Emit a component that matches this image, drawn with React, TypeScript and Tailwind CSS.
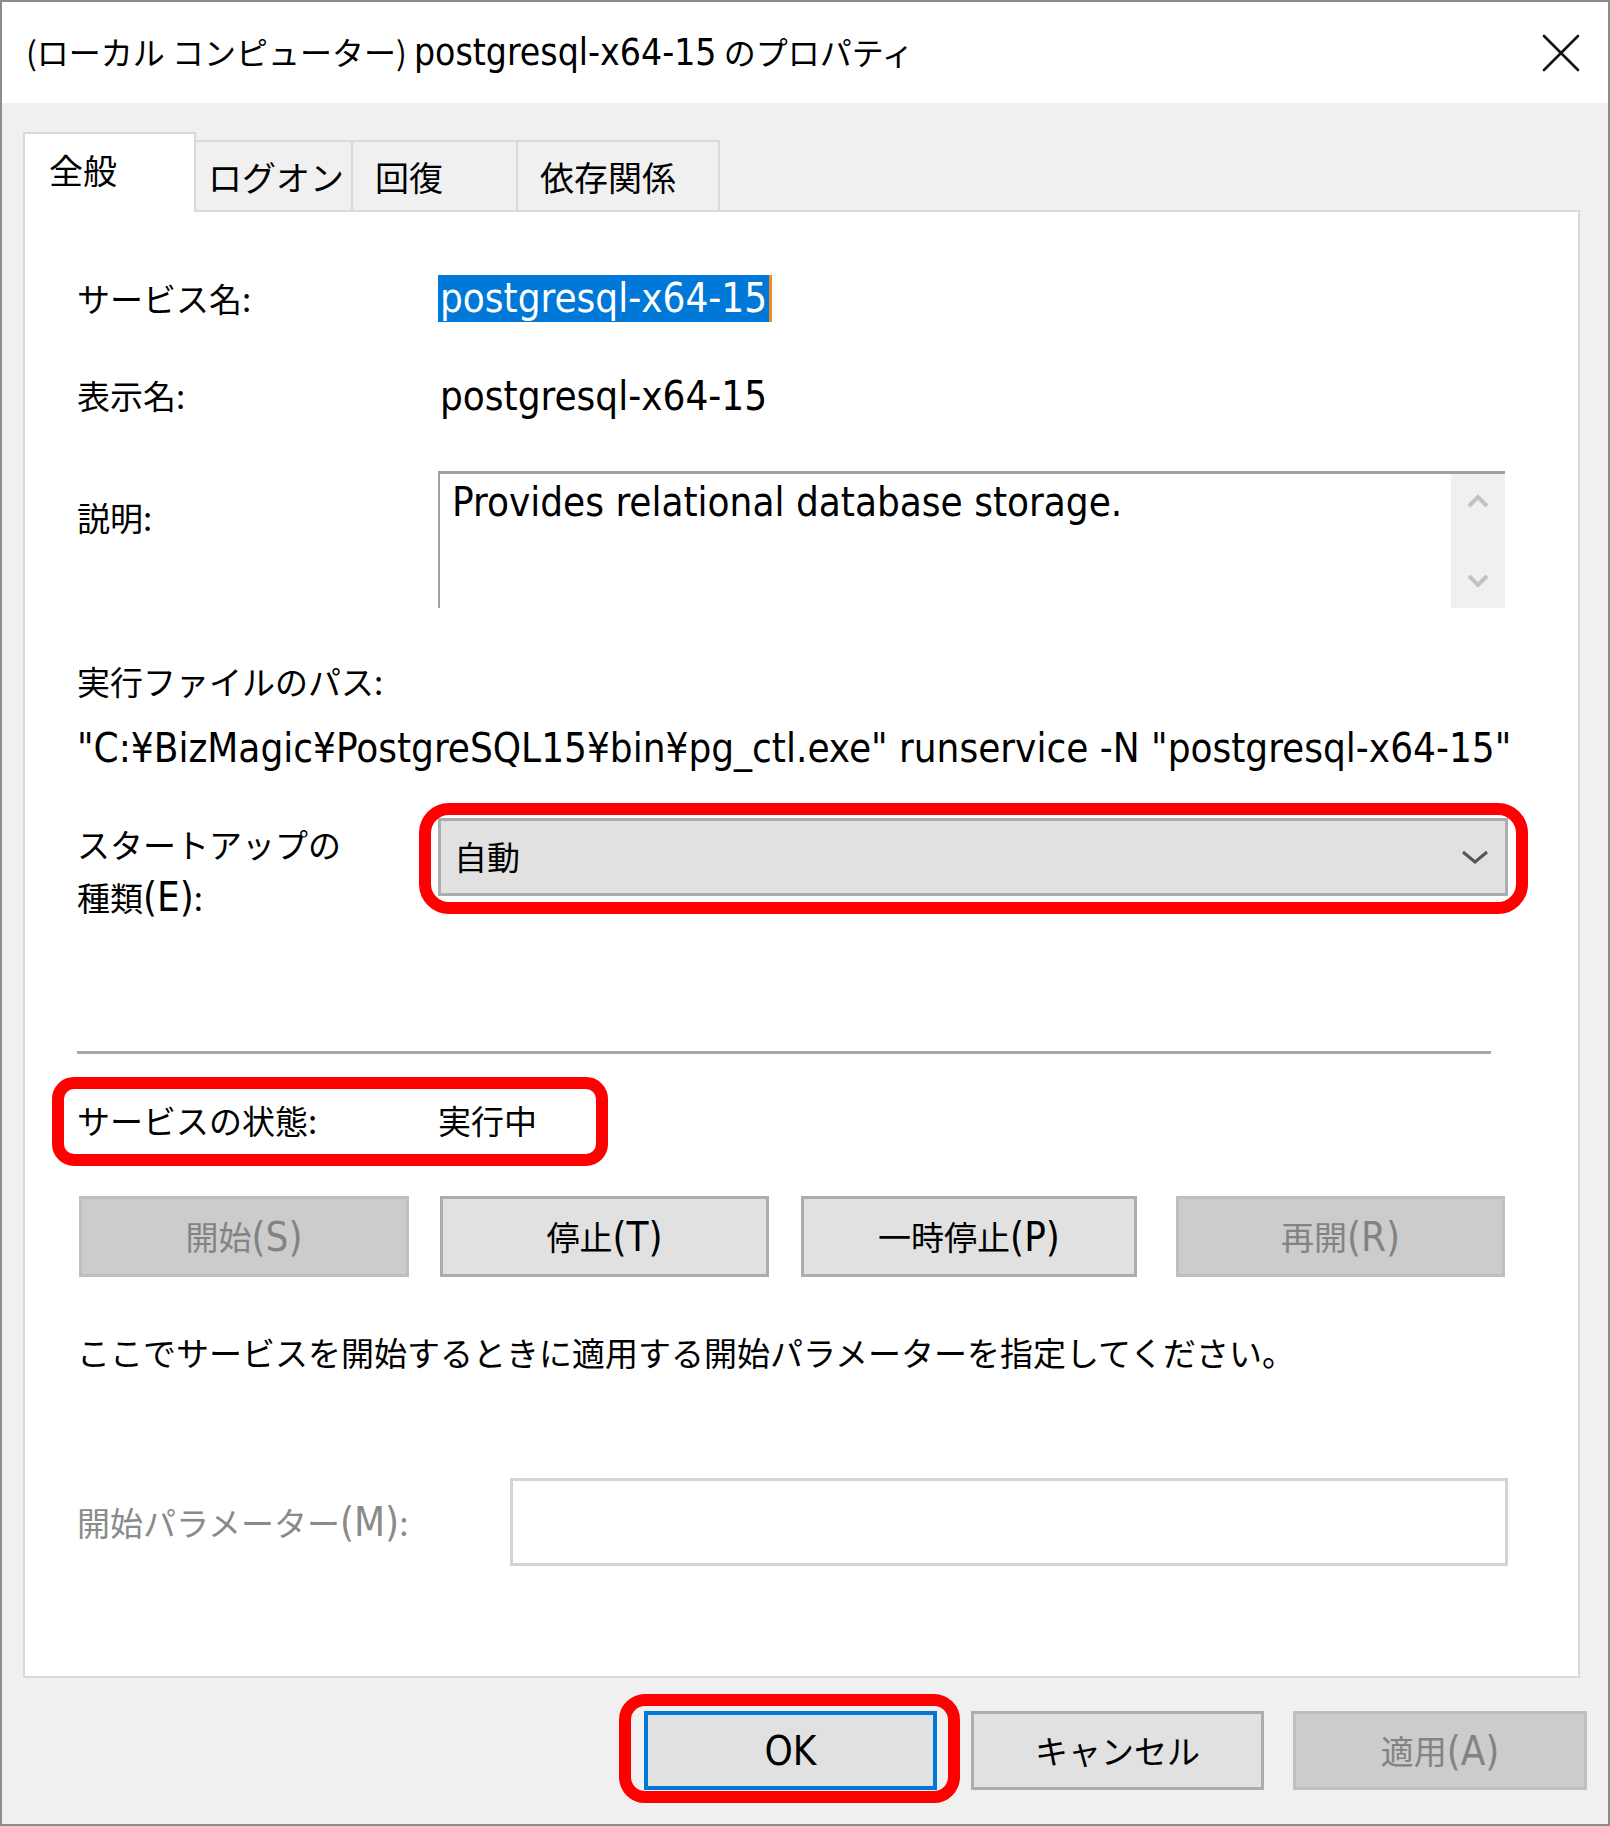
import React from 'react';

const lat = "font-['DejaVu_Sans_Condensed','Noto_Sans_CJK_JP',sans-serif] text-[40px]";

function DlgButton({ label, accel, width, disabled, className = '' }: { label: string; accel: string; width: string; disabled?: boolean; className?: string }) {
  return (
    <div
      className={`${width} h-[81px] flex items-center justify-center text-[33px] border-[3px] ${
        disabled ? 'bg-[#cccccc] border-[#bfbfbf] text-[#838383]' : 'bg-[#e1e1e1] border-[#adadad] text-black'
      } ${className}`}
    >
      {label}
      <span className={lat}>{accel}</span>
    </div>
  );
}

export default function App() {
  return (
    <div className="w-[1610px] h-[1826px] bg-[#f0f0f0] border-2 border-[#8c8c8c] flex flex-col font-['Noto_Sans_CJK_JP',sans-serif] text-black overflow-hidden">
      {/* Title bar */}
      <div className="h-[101px] shrink-0 bg-white flex items-center justify-between pl-[24px] pr-[28px]">
        <div className="text-[32px] leading-none whitespace-nowrap">
          (ローカル コンピューター) <span className="font-['DejaVu_Sans_Condensed','Noto_Sans_CJK_JP',sans-serif] text-[37px]">postgresql-x64-15</span> のプロパティ
        </div>
        <svg width="38" height="38" viewBox="0 0 38 38">
          <path d="M2 2 L36 36 M36 2 L2 36" stroke="#111" strokeWidth="2.6" strokeLinecap="round" />
        </svg>
      </div>

      {/* Tabs */}
      <div className="flex items-end ml-[21px] mt-[29px] -mb-[2px] relative z-10 text-[34px]">
        <div className="w-[173px] h-[80px] bg-white border-2 border-b-0 border-[#d9d9d9] pl-[24px] pb-[8px] flex items-center">全般</div>
        <div className="w-[157px] h-[70px] mb-[2px] border-t-2 border-r-2 border-[#d9d9d9] pl-[12px] flex items-center">ログオン</div>
        <div className="w-[165px] h-[70px] mb-[2px] border-t-2 border-r-2 border-[#d9d9d9] pl-[22px] flex items-center">回復</div>
        <div className="w-[202px] h-[70px] mb-[2px] border-t-2 border-r-2 border-[#d9d9d9] pl-[22px] flex items-center">依存関係</div>
      </div>

      {/* Panel */}
      <div className="ml-[21px] w-[1557px] h-[1468px] shrink-0 bg-white border-2 border-[#d9d9d9] pl-[52px] flex flex-col text-[33px]">
        <div className="flex items-center h-[47px] mt-[63px]">
          <div className="w-[361px]">サービス名:</div>
          <span className={`${lat} leading-[47px] h-[47px] bg-[#0078d7] text-white px-[2px] border-r-[3px] border-[#f08a24]`}>postgresql-x64-15</span>
        </div>

        <div className="flex items-center h-[48px] mt-[50px]">
          <div className="w-[361px]">表示名:</div>
          <span className={`${lat} pl-[2px]`}>postgresql-x64-15</span>
        </div>

        <div className="flex items-start h-[137px] mt-[51px]">
          <div className="w-[361px] h-[48px] mt-[23px] flex items-center">説明:</div>
          <div className="w-[1067px] h-[137px] bg-white border-t-[3px] border-l-[2px] border-[#a0a0a0] flex">
            <div className={`${lat} flex-1 pl-[12px] pt-[4px] leading-[48px]`}>Provides relational database storage.</div>
            <div className="w-[54px] h-full bg-[#f0f0f0] flex flex-col items-center justify-between py-[20px]">
              <svg width="22" height="14" viewBox="0 0 22 14">
                <path d="M2 12 L11 3 L20 12" fill="none" stroke="#c2c2c2" strokeWidth="4" />
              </svg>
              <svg width="22" height="14" viewBox="0 0 22 14">
                <path d="M2 2 L11 11 L20 2" fill="none" stroke="#c2c2c2" strokeWidth="4" />
              </svg>
            </div>
          </div>
        </div>

        <div className="flex items-center h-[48px] mt-[50px]">実行ファイルのパス:</div>
        <div className={`flex items-center h-[48px] mt-[18px] whitespace-nowrap ${lat}`}>
          "C:¥BizMagic¥PostgreSQL15¥bin¥pg_ctl.exe" runservice -N "postgresql-x64-15"
        </div>

        <div className="flex items-start h-[78px] mt-[46px]">
          <div className="w-[361px] leading-[53px]">
            スタートアップの
            <br />
            種類<span className={lat}>(E)</span>:
          </div>
          <div className="relative">
            <div className="w-[1070px] h-[78px] bg-[#e1e1e1] border-[3px] border-[#adadad] flex items-center justify-between pl-[13px] pr-[16px]">
              <span>自動</span>
              <svg width="28" height="16" viewBox="0 0 28 16">
                <path d="M2 3 L14 13 L26 3" fill="none" stroke="#555" strokeWidth="3" />
              </svg>
            </div>
            <div className="absolute -left-[19px] -right-[20px] -top-[15px] -bottom-[18px] border-[12px] border-[#ff0000] rounded-[30px]" />
          </div>
        </div>

        <div className="w-[1414px] h-[3px] bg-[#a8a8a8] mt-[155px]" />

        <div className="relative flex items-center h-[48px] w-[506px] mt-[43px]">
          <div className="w-[361px]">サービスの状態:</div>
          <div>実行中</div>
          <div className="absolute -left-[25px] -right-[25px] -top-[20px] -bottom-[21px] border-[12px] border-[#ff0000] rounded-[22px]" />
        </div>

        <div className="flex mt-[51px]">
          <DlgButton label="開始" accel="(S)" width="w-[330px]" disabled className="ml-[2px]" />
          <DlgButton label="停止" accel="(T)" width="w-[329px]" className="ml-[31px]" />
          <DlgButton label="一時停止" accel="(P)" width="w-[336px]" className="ml-[32px]" />
          <DlgButton label="再開" accel="(R)" width="w-[329px]" disabled className="ml-[39px]" />
        </div>

        <div className="flex items-center h-[48px] mt-[52px] whitespace-nowrap">
          ここでサービスを開始するときに適用する開始パラメーターを指定してください。
        </div>

        <div className="flex items-center h-[88px] mt-[101px]">
          <div className="w-[433px] text-[#8a8a8a]">
            開始パラメーター<span className={lat}>(M)</span>:
          </div>
          <div className="w-[998px] h-[88px] bg-white border-[3px] border-[#d4d4d4]" />
        </div>
      </div>

      {/* Bottom buttons */}
      <div className="flex justify-end mt-[33px] mr-[21px] text-[33px]">
        <div className="relative">
          <div className={`w-[293px] h-[79px] bg-[#e1e1e1] border-[4px] border-[#0078d7] flex items-center justify-center ${lat}`}>OK</div>
          <div className="absolute -left-[25px] -right-[23px] -top-[17px] -bottom-[13px] border-[12px] border-[#ff0000] rounded-[26px]" />
        </div>
        <div className="w-[293px] h-[79px] ml-[34px] bg-[#e1e1e1] border-[3px] border-[#adadad] flex items-center justify-center">キャンセル</div>
        <div className="w-[294px] h-[79px] ml-[29px] bg-[#cccccc] border-[3px] border-[#bfbfbf] text-[#838383] flex items-center justify-center">
          適用<span className={lat}>(A)</span>
        </div>
      </div>
    </div>
  );
}
